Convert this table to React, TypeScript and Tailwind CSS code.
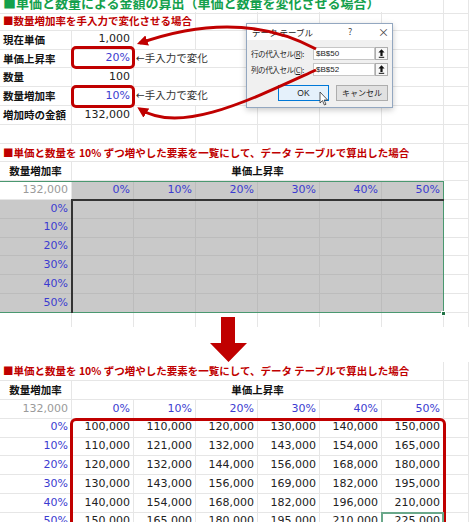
import React from "react";

const COLS = "grid grid-cols-[72px_62px_62px_62px_62px_62px_62px_1fr]";
const FONT = "font-['DejaVu_Sans','Noto_Sans_CJK_JP',sans-serif]";
const JP = "font-['Noto_Sans_CJK_JP',sans-serif]";

const pcts = [0, 10, 20, 30, 40, 50];

type CellProps = { children?: React.ReactNode; className?: string; gray?: boolean };

function Cell({ children, className = "", gray = false }: CellProps) {
  return (
    <div
      className={`h-full border-r border-b flex items-center whitespace-nowrap ${
        gray ? "bg-[#c9c9c9] border-[#bcbcbc]" : "border-[#e6e6e6]"
      } ${className}`}
    >
      {children}
    </div>
  );
}

function blanks(n: number, gray = false) {
  return Array.from({ length: n }, (_, i) => <Cell key={i} gray={gray} />);
}

function Row({ children, className = "" }: { children: React.ReactNode; className?: string }) {
  return <div className={`${COLS} h-[18.8px] ${className}`}>{children}</div>;
}

function Label({ children }: { children: React.ReactNode }) {
  return <Cell className={`pl-[3px] ${JP} font-bold text-[10.5px] text-[#111]`}>{children}</Cell>;
}

function Num({ children, blue = false, gray = false, muted = false }: { children: React.ReactNode; blue?: boolean; gray?: boolean; muted?: boolean }) {
  const color = blue ? "text-[#3b3bd0]" : muted ? "text-[#9a9a9a]" : "text-[#222]";
  return (
    <Cell gray={gray} className={`justify-end pr-[3px] text-[11px] ${color}`}>
      {children}
    </Cell>
  );
}

function Heading({ children, span, color, size }: { children: React.ReactNode; span: string; color: string; size: string }) {
  return (
    <div className={`${span} h-full border-b border-r border-[#e6e6e6] flex items-center pl-[3px] whitespace-nowrap ${JP} font-bold ${size} ${color}`}>
      {children}
    </div>
  );
}

function Note() {
  return (
    <div className={`col-span-2 h-full border-b border-r border-[#e6e6e6] flex items-center pl-[2px] whitespace-nowrap text-[10.5px] text-[#333]`}>
      ←手入力で変化
    </div>
  );
}

function AxisRow() {
  return (
    <Row>
      <Cell className={`justify-center ${JP} font-bold text-[10.5px] text-[#111]`}>数量増加率</Cell>
      <div className={`col-span-6 h-full border-b border-r border-[#e6e6e6] flex items-center justify-center ${JP} font-bold text-[10.5px] text-[#111]`}>
        単価上昇率
      </div>
      <Cell />
    </Row>
  );
}

function UpIcon() {
  return (
    <svg width="7" height="9" viewBox="0 0 7 9">
      <path d="M3.5,0.3 L6.6,3.6 H4.6 V6.9 H2.4 V3.6 H0.4 Z" fill="#111" />
      <rect x="0.8" y="7.8" width="5.4" height="1" fill="#111" />
    </svg>
  );
}

function RefField({ label, letter, value }: { label: string; letter: string; value: string }) {
  return (
    <div className="flex items-center h-[13px]">
      <span className="w-[62px] text-[7.5px] tracking-[-0.4px] whitespace-nowrap">
        {label}(<span className="underline">{letter}</span>):
      </span>
      <div className="w-[62px] h-[13px] bg-white border border-[#c6c6c6] flex items-center pl-[2px] font-['Liberation_Sans',sans-serif] text-[8px]">
        {value}
      </div>
      <div className="w-[13px] h-[13px] bg-[#f7f7f7] border border-[#adadad] flex items-center justify-center">
        <UpIcon />
      </div>
    </div>
  );
}

function Dialog() {
  return (
    <div className={`absolute left-[246px] top-[23px] w-[147px] h-[85px] bg-[#f0f0f0] border border-[#93a7c0] shadow-[0_2px_6px_rgba(0,0,0,0.22)] flex flex-col ${JP} text-[#222]`}>
      <div className="h-[16px] bg-white flex items-center pl-[5px] text-[8.5px]">
        <span className="flex-1">データ テーブル</span>
        <span className="w-[30px] text-[9px] text-[#444]">?</span>
        <span className="w-[14px] text-[11px] leading-none text-[#444]">×</span>
      </div>
      <div className="flex flex-col gap-[3px] px-[4px] pt-[7px]">
        <RefField label="行の代入セル" letter="R" value="$B$50" />
        <RefField label="列の代入セル" letter="C" value="$B$52" />
        <div className="flex justify-end gap-[7px] mt-[6px]">
          <div className="w-[51px] h-[16px] bg-[#e5f1fb] border border-[#0078d7] flex items-center justify-center font-['Liberation_Sans',sans-serif] text-[8.5px]">
            OK
          </div>
          <div className="w-[52px] h-[16px] bg-[#e1e1e1] border border-[#adadad] flex items-center justify-center text-[8px]">
            キャンセル
          </div>
        </div>
      </div>
    </div>
  );
}

export default function App() {
  return (
    <div className={`relative w-[469px] h-[522px] overflow-hidden bg-white ${FONT}`}>
      {/* upper sheet */}
      <Row className="-mt-[6.8px]">
        <Heading span="col-span-7" color="text-[#14a04c]" size="text-[13px]">
          ■単価と数量による金額の算出（単価と数量を変化させる場合）
        </Heading>
        <Cell />
      </Row>
      <Row>
        <Heading span="col-span-3" color="text-[#c00000]" size="text-[10.5px]">
          ■数量増加率を手入力で変化させる場合
        </Heading>
        {blanks(5)}
      </Row>
      <Row>
        <Label>現在単価</Label>
        <Num>1,000</Num>
        {blanks(6)}
      </Row>
      <Row>
        <Label>単価上昇率</Label>
        <Num blue>20%</Num>
        <Note />
        {blanks(4)}
      </Row>
      <Row>
        <Label>数量</Label>
        <Num>100</Num>
        {blanks(6)}
      </Row>
      <Row>
        <Label>数量増加率</Label>
        <Num blue>10%</Num>
        <Note />
        {blanks(4)}
      </Row>
      <Row>
        <Label>増加時の金額</Label>
        <Num>132,000</Num>
        {blanks(6)}
      </Row>
      <Row>{blanks(8)}</Row>
      <Row>
        <Heading span="col-span-7" color="text-[#c00000]" size="text-[10.5px]">
          ■単価と数量を 10% ずつ増やした要素を一覧にして、データ テーブルで算出した場合
        </Heading>
        <Cell />
      </Row>
      <AxisRow />
      <Row>
        <Num muted>132,000</Num>
        {pcts.map((p) => (
          <Num key={p} blue gray>
            {p}%
          </Num>
        ))}
        <Cell />
      </Row>
      {pcts.map((q) => (
        <Row key={q}>
          <Num blue gray>
            {q}%
          </Num>
          {blanks(6, true)}
          <Cell />
        </Row>
      ))}
      <div className={`${COLS} h-[14px]`}>
        {Array.from({ length: 8 }, (_, i) => (
          <div key={i} className="border-r border-[#e6e6e6]" />
        ))}
      </div>
      <div className="h-[35.6px]" />

      {/* lower sheet */}
      <Row>
        <Heading span="col-span-7" color="text-[#c00000]" size="text-[10.5px]">
          ■単価と数量を 10% ずつ増やした要素を一覧にして、データ テーブルで算出した場合
        </Heading>
        <Cell />
      </Row>
      <AxisRow />
      <Row>
        <Num muted>132,000</Num>
        {pcts.map((p) => (
          <Num key={p} blue>
            {p}%
          </Num>
        ))}
        <Cell />
      </Row>
      {pcts.map((q) => (
        <Row key={q}>
          <Num blue>{q}%</Num>
          {pcts.map((u) => (
            <Num key={u}>{(10 * (100 + u) * (100 + q)).toLocaleString("en-US")}</Num>
          ))}
          <Cell />
        </Row>
      ))}

      {/* selection + table borders (middle) */}
      <div className="absolute left-0 top-[181px] w-[444px] h-[132px] border border-l-0 border-[#4a9870] pointer-events-none" />
      <div className="absolute left-[441px] top-[310.5px] w-[5px] h-[5px] bg-[#217346] border border-white" />
      <div className="absolute left-[71px] top-[199px] w-[373px] h-[114px] border-t-2 border-l-2 border-[#333]" />

      {/* red frames */}
      <div className="absolute left-[71px] top-[46px] w-[64px] h-[23px] border-[3px] border-[#c00000] rounded-[5px]" />
      <div className="absolute left-[71px] top-[85px] w-[64px] h-[23px] border-[3px] border-[#c00000] rounded-[5px]" />
      <div className="absolute left-[70px] top-[418px] w-[376px] h-[130px] border-[3px] border-[#c00000] rounded-[6px]" />
      <div className="absolute left-[381px] top-[512px] w-[63px] h-[20px] border-2 border-[#6aa88a]" />

      <Dialog />

      {/* mouse pointer */}
      <svg className="absolute left-[319px] top-[91px]" width="10" height="15" viewBox="0 0 10 15">
        <path d="M1,1 L1,12 L3.5,9.6 L5.4,14 L7,13.3 L5.1,9 L8.6,9 Z" fill="white" stroke="#333" strokeWidth="0.8" />
      </svg>

      {/* callout arrows */}
      <svg className="absolute left-0 top-0 pointer-events-none" width="469" height="522">
        <defs>
          <marker id="ah" viewBox="0 0 10 10" refX="7" refY="5" markerWidth="3.6" markerHeight="3.6" orient="auto">
            <path d="M0,0 L10,5 L0,10 z" fill="#c00000" />
          </marker>
        </defs>
        <path d="M316,49 Q240,8 140,43" stroke="#c00000" strokeWidth="3" fill="none" markerEnd="url(#ah)" />
        <path d="M316,70 C250,100 180,135 140,109" stroke="#c00000" strokeWidth="3" fill="none" markerEnd="url(#ah)" />
      </svg>

      <svg className="absolute left-[209px] top-[317px]" width="40" height="46">
        <path d="M12,0 H26 V26 H38 L19.5,45 L1,26 H12 Z" fill="#c00000" />
      </svg>
    </div>
  );
}
